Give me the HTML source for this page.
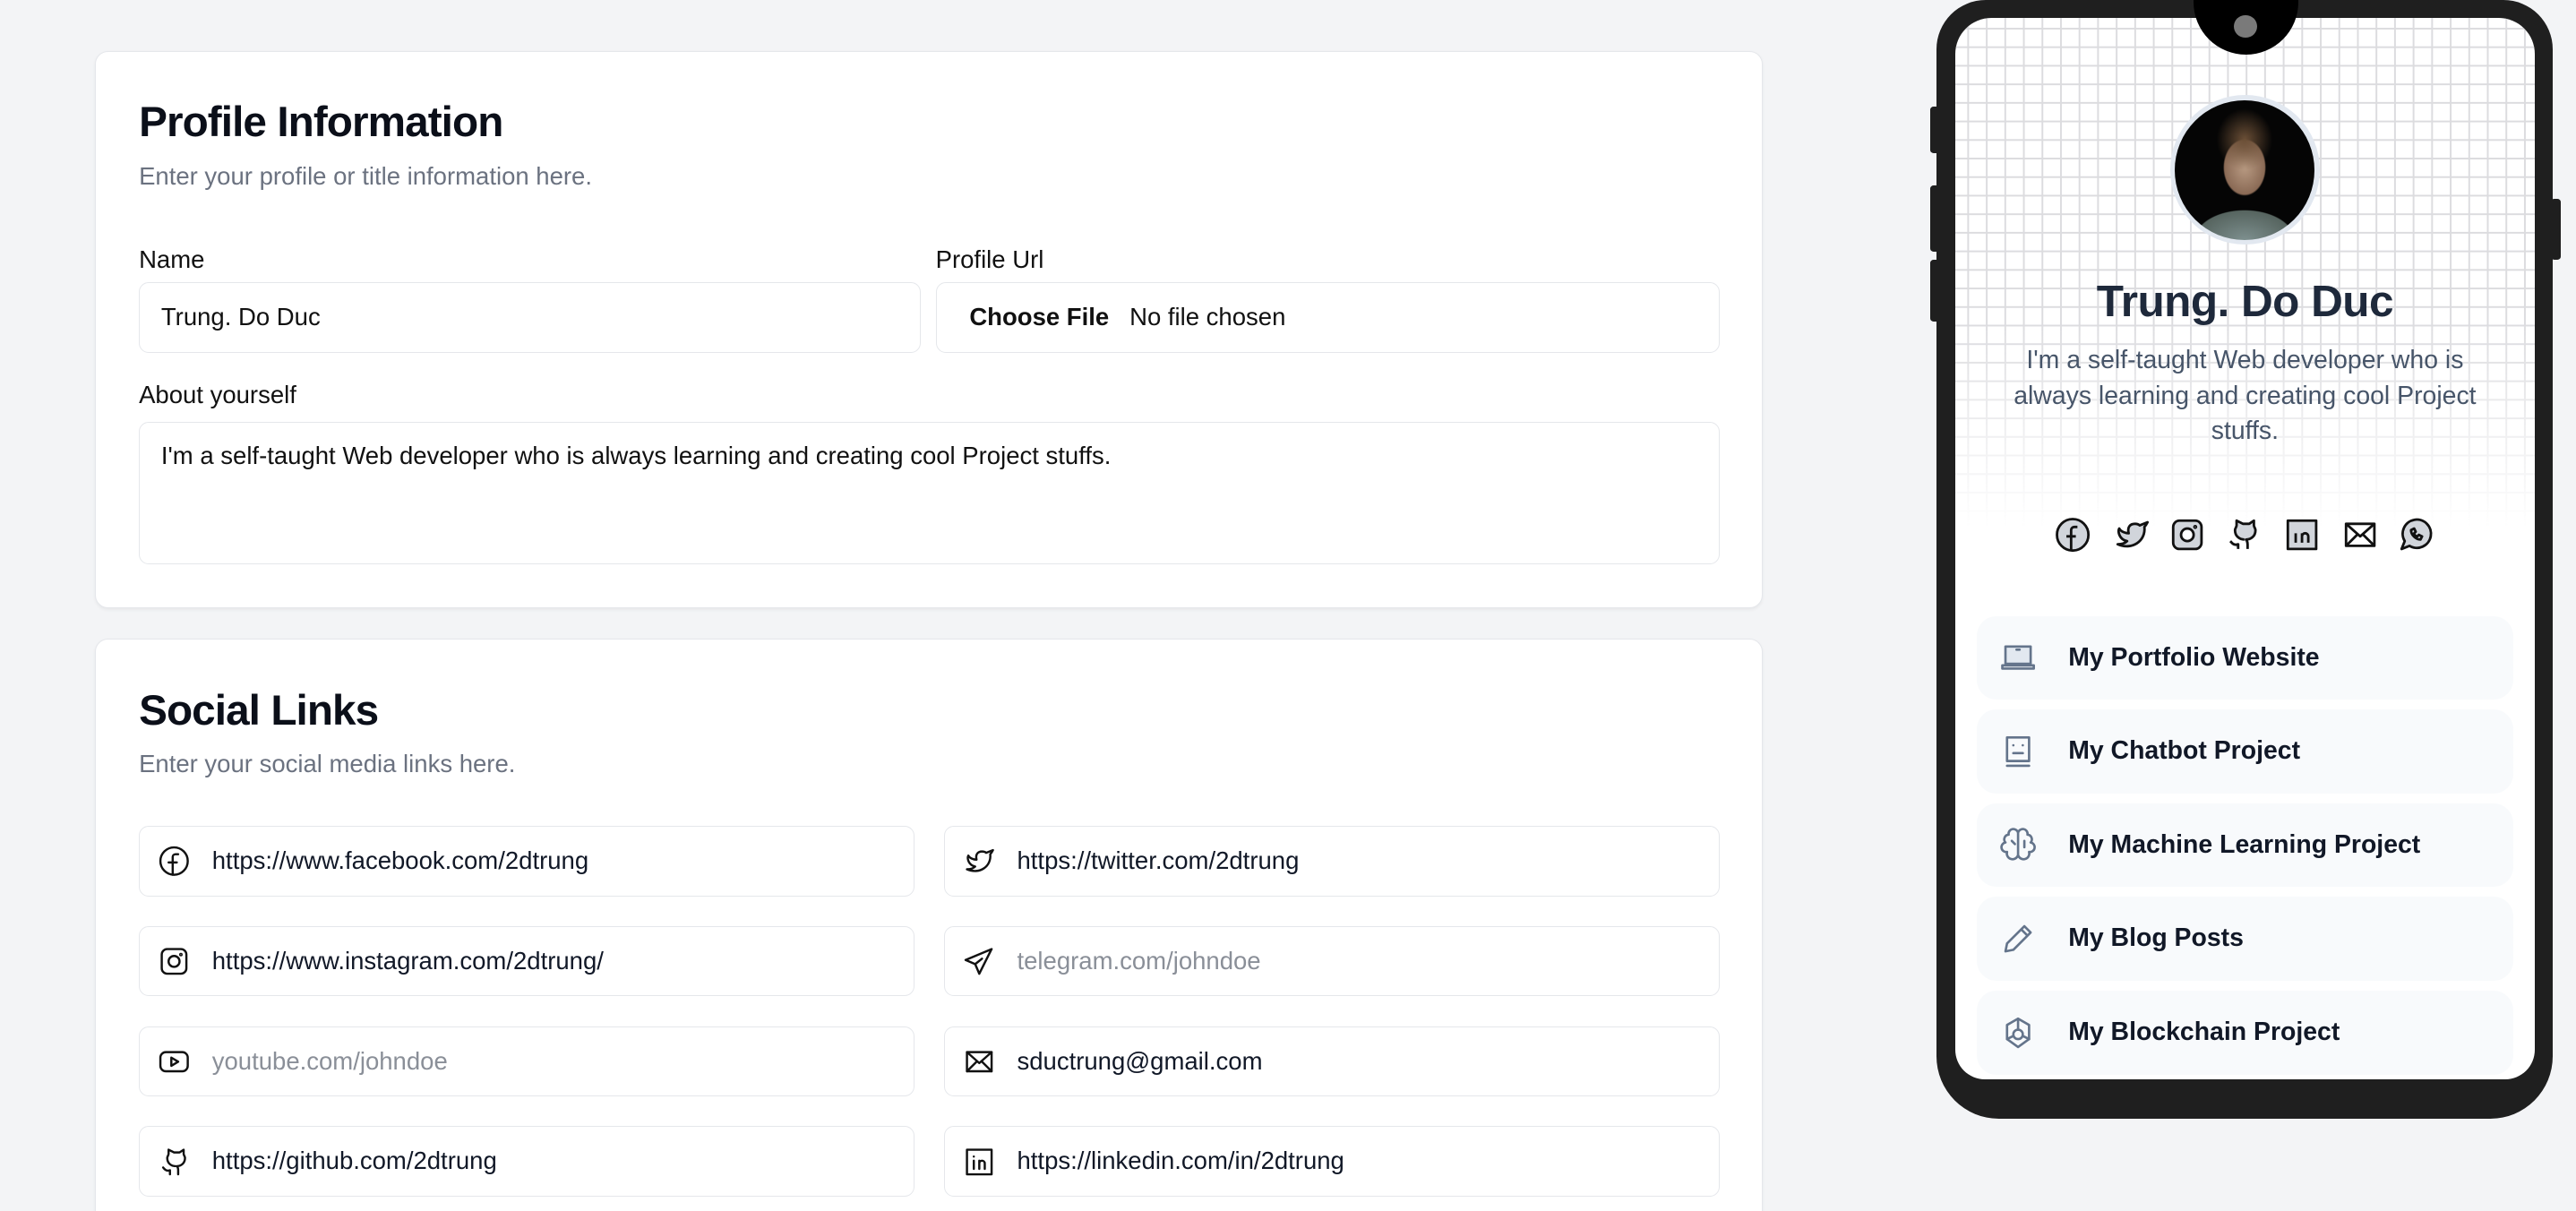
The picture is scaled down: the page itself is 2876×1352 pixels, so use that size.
<!DOCTYPE html>
<html><head><meta charset="utf-8">
<style>
*{box-sizing:border-box;margin:0;padding:0}
html,body{width:2876px;height:1352px;overflow:hidden;background:#f3f4f6}
#w{zoom:1.83418;width:1568px;height:737px;position:relative;font-family:"Liberation Sans",sans-serif;color:#111827}
.card{position:absolute;left:58px;width:1015px;background:#fff;border:1px solid #e5e7eb;border-radius:8px;box-shadow:0 1px 2px rgba(0,0,0,.05)}
h2{position:absolute;left:26px;font-size:26px;font-weight:700;letter-spacing:-.5px;color:#0b0f19}
.sub{position:absolute;left:26px;font-size:15px;color:#6b7280}
.lbl{position:absolute;font-size:15px;color:#111}
.inp{position:absolute;height:43px;border:1px solid #e5e7eb;border-radius:6px;background:#fff;font-size:15px;line-height:41px;padding-left:13px;color:#111}
.si{position:absolute;height:43px;border:1px solid #e5e7eb;border-radius:6px;font-size:15px;line-height:41px;padding-left:44px;width:472px}
.si svg{position:absolute;left:11px;top:11px;width:20px;height:20px;fill:none;stroke:#111;stroke-width:1.6;stroke-linecap:round;stroke-linejoin:round}
.ph{color:#8a8f98}
.phone{position:absolute;left:1179px;top:0;width:375px;height:681px;background:#1f1f1f;border-radius:30px 30px 38px 38px}
.btn{position:absolute;background:#1f1f1f;width:6px;border-radius:2px}
.screen{position:absolute;left:11px;top:11px;width:353px;height:646px;background:#fff;border-radius:22px 22px 18px 18px;overflow:hidden}
.grid{position:absolute;left:0;top:0;width:100%;height:310px;background-image:linear-gradient(#d4d4d8 1px,transparent 1px),linear-gradient(90deg,#d4d4d8 1px,transparent 1px);background-size:11.3px 11.3px;background-position:-4px 6px;-webkit-mask-image:linear-gradient(#000 60%,transparent);opacity:.8}
.link{position:absolute;left:13px;width:327px;height:51px;background:#f8fafc;border-radius:12px;font-size:15.5px;font-weight:700;line-height:51px;padding-left:56px;color:#111827}
.link svg{position:absolute;left:14px;top:14px;width:23px;height:23px;fill:none;stroke:#64748b;stroke-width:1.5;stroke-linecap:round;stroke-linejoin:round}
.soc svg{position:absolute;top:303px;width:23px;height:23px;fill:#d1d5db;stroke:#111;stroke-width:1.6;stroke-linejoin:round}
</style></head><body><div id="w">

<div class="card" style="top:31px;height:339px">
 <h2 style="top:28px">Profile Information</h2>
 <div class="sub" style="top:67px">Enter your profile or title information here.</div>
 <div class="lbl" style="left:26px;top:118px">Name</div>
 <div class="lbl" style="left:511px;top:118px">Profile Url</div>
 <div class="inp" style="left:26px;top:140px;width:476px">Trung. Do Duc</div>
 <div class="inp" style="left:511px;top:140px;width:477px;padding-left:20px"><b style="font-weight:700">Choose File</b>&nbsp;&nbsp; No file chosen</div>
 <div class="lbl" style="left:26px;top:200px">About yourself</div>
 <div class="inp" style="left:26px;top:225px;width:962px;height:87px;line-height:18px;padding-top:11px">I'm a self-taught Web developer who is always learning and creating cool Project stuffs.</div>
</div>

<div class="card" style="top:389px;height:380px">
 <h2 style="top:28px">Social Links</h2>
 <div class="sub" style="top:67px">Enter your social media links here.</div>
 <div class="si" style="left:26px;top:113px"><svg viewBox="0 0 24 24"><circle cx="12" cy="12" r="10"/><path d="M15 7h-2a2 2 0 0 0-2 2v13M8 13h6"/></svg>https://www.facebook.com/2dtrung</div>
 <div class="si" style="left:516px;top:113px"><svg viewBox="0 0 24 24"><path d="M22 4s-1 2-2 3c1 9-8 15-17 11 3 0 5-1 6-2-5-1-6-6-5-8 1 2 4 3 6 3-1-4 1-6 4-6 2 0 3 1 3 1z"/></svg>https://twitter.com/2dtrung</div>
 <div class="si" style="left:26px;top:174px"><svg viewBox="0 0 24 24"><rect x="3" y="3" width="18" height="18" rx="4"/><circle cx="12" cy="12" r="4"/><circle cx="17" cy="7" r=".5"/></svg>https://www.instagram.com/2dtrung/</div>
 <div class="si ph" style="left:516px;top:174px"><svg viewBox="0 0 24 24"><path d="M21 3L2 11l7 3 3 7zM9 14l5-4"/></svg>telegram.com/johndoe</div>
 <div class="si ph" style="left:26px;top:235px"><svg viewBox="0 0 24 24"><rect x="2" y="5" width="20" height="14" rx="4"/><path d="M10 9l5 3-5 3z"/></svg>youtube.com/johndoe</div>
 <div class="si" style="left:516px;top:235px"><svg viewBox="0 0 24 24"><rect x="3" y="5" width="18" height="14"/><path d="M3 5l9 8 9-8M3 19l7-7M21 19l-7-7"/></svg>sductrung@gmail.com</div>
 <div class="si" style="left:26px;top:296px"><svg viewBox="0 0 24 24"><path d="M9 21v-3c-3 1-4-1-5-2M15 21v-3c0-1 0-2-1-3 3 0 6-2 6-6 0-1-1-2-1-3V3l-3 2h-4L8 3v3c0 1-1 2-1 3 0 4 3 6 6 6"/></svg>https://github.com/2dtrung</div>
 <div class="si" style="left:516px;top:296px"><svg viewBox="0 0 24 24"><rect x="3" y="3" width="18" height="18"/><path d="M8 11v6M8 8v0M12 17v-6M12 13a2 2 0 0 1 4 0v4"/></svg>https://linkedin.com/in/2dtrung</div>
</div>

<div class="btn" style="left:1175px;top:65px;height:28px"></div>
<div class="btn" style="left:1175px;top:113px;height:40px"></div>
<div class="btn" style="left:1175px;top:158px;height:38px"></div>
<div class="btn" style="left:1553px;top:121px;height:37px"></div>
<div class="phone">
 <div class="screen">
  <div class="grid"></div>
  <div style="position:absolute;left:0;width:353px;top:157px;text-align:center;font-size:27px;font-weight:700;color:#1e293b;letter-spacing:-.3px">Trung. Do Duc</div>
  <div style="position:absolute;left:25px;width:303px;top:198px;text-align:center;font-size:15.5px;line-height:21.5px;color:#475569">I'm a self-taught Web developer who is always learning and creating cool Project stuffs.</div>
  <div style="position:absolute;left:131px;top:47px;width:91px;height:91px;border-radius:50%;background:#e2e8f0;padding:3px"><div style="width:100%;height:100%;border-radius:50%;background:radial-gradient(ellipse 20% 22% at 50% 28%,#6b4f36 0,transparent 100%),radial-gradient(ellipse 24% 32% at 50% 48%,#b89a82 0,#8a6a55 60%,transparent 64%),radial-gradient(ellipse 50% 30% at 50% 100%,#7d8f8e 0,#56645f 70%,transparent 72%),#050505"></div></div>
  <div class="soc">
   <svg style="left:60px" viewBox="0 0 24 24"><circle cx="12" cy="12" r="10"/><path fill="none" d="M15 7h-2a2 2 0 0 0-2 2v13M8 13h6"/></svg>
   <svg style="left:96px" viewBox="0 0 24 24"><path d="M22 4s-1 2-2 3c1 9-8 15-17 11 3 0 5-1 6-2-5-1-6-6-5-8 1 2 4 3 6 3-1-4 1-6 4-6 2 0 3 1 3 1z"/></svg>
   <svg style="left:130px" viewBox="0 0 24 24"><rect x="3" y="3" width="18" height="18" rx="4"/><circle cx="12" cy="12" r="4" fill="#fff"/><circle cx="17" cy="7" r=".5"/></svg>
   <svg style="left:164px" viewBox="0 0 24 24"><path d="M9 21v-3c-3 1-4-1-5-2M15 21v-3c0-1 0-2-1-3 3 0 6-2 6-6 0-1-1-2-1-3V3l-3 2h-4L8 3v3c0 1-1 2-1 3 0 4 3 6 6 6"/></svg>
   <svg style="left:200px" viewBox="0 0 24 24"><rect x="3" y="3" width="18" height="18"/><path fill="none" d="M8 11v6M8 8v0M12 17v-6M12 13a2 2 0 0 1 4 0v4"/></svg>
   <svg style="left:235px" viewBox="0 0 24 24"><rect x="3" y="5" width="18" height="14" fill="#fff"/><path fill="none" d="M3 5l9 8 9-8M3 19l7-7M21 19l-7-7"/></svg>
   <svg style="left:269px" viewBox="0 0 24 24"><path d="M3 21l2-5a9 9 0 1 1 3 3z"/><path fill="none" d="M9 9c0 3 3 6 6 6l1-2-2-1-1 1c-1 0-2-1-2-2l1-1-1-2z"/></svg>
  </div>
  <div class="link" style="top:364px"><svg viewBox="0 0 24 24"><rect x="4" y="5" width="16" height="11" fill="#e2e8f0"/><path d="M2 17h20v2H2zM11 7h2"/></svg>My Portfolio Website</div>
  <div class="link" style="top:421px"><svg viewBox="0 0 24 24"><rect x="5" y="3" width="14" height="15"/><path d="M5 21h14M9 8v0M15 8v0M9 13h6"/></svg>My Chatbot Project</div>
  <div class="link" style="top:478px"><svg viewBox="0 0 24 24"><path d="M12 4a3 3 0 0 0-6 1 3 3 0 0 0-2 5 3 3 0 0 0 1 6 3 3 0 0 0 7 2zM12 4a3 3 0 0 1 6 1 3 3 0 0 1 2 5 3 3 0 0 1-1 6 3 3 0 0 1-7 2zM8 9l2 2M16 9v4"/></svg>My Machine Learning Project</div>
  <div class="link" style="top:535px"><svg viewBox="0 0 24 24"><path d="M4 20l1-5L16 4l4 4L9 19zM14 6l4 4"/></svg>My Blog Posts</div>
  <div class="link" style="top:592px"><svg viewBox="0 0 24 24"><path d="M12 3l7 4v9l-7 5-7-5V7z"/><circle cx="12" cy="13" r="3"/><path d="M12 3v7M5 16l4-2M19 16l-4-2"/></svg>My Blockchain Project</div>
 </div>
 <div style="position:absolute;left:156px;top:0;width:64px;height:33px;background:#000;border-radius:0 0 32px 32px"></div>
 <div style="position:absolute;left:181px;top:9px;width:14px;height:14px;background:#7a7a7a;border-radius:50%"></div>
</div>

</div></body></html>
